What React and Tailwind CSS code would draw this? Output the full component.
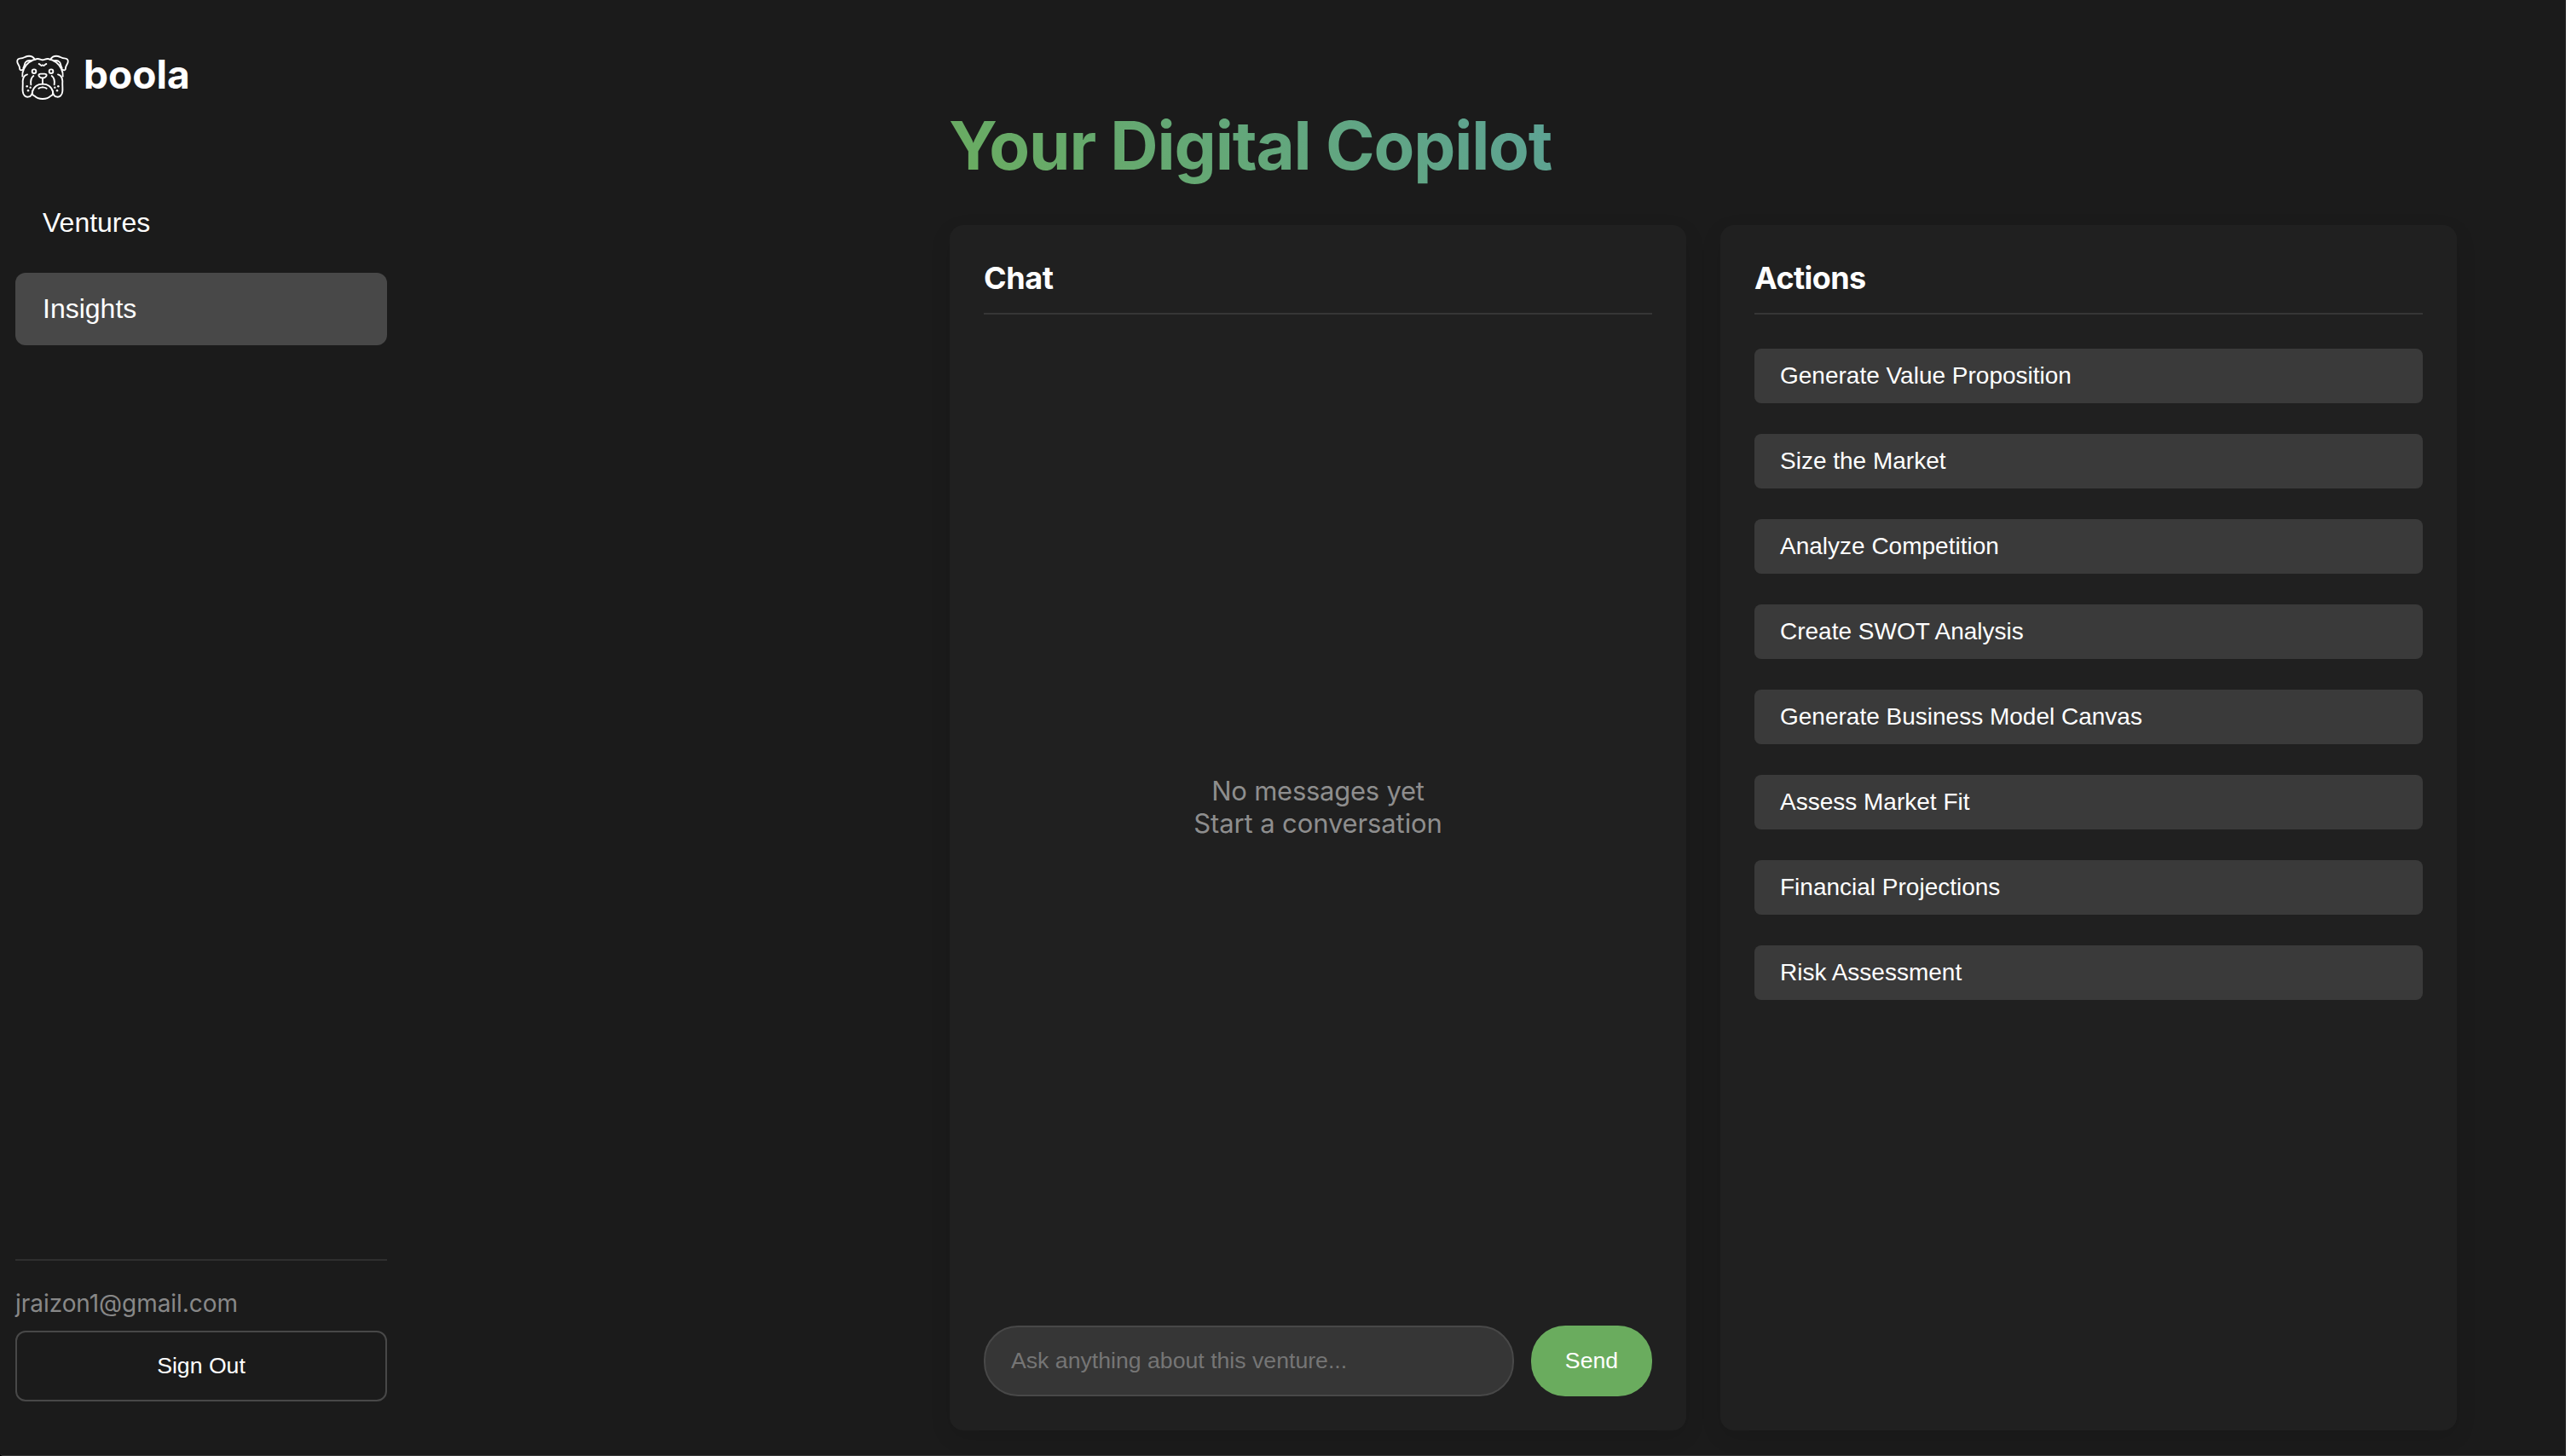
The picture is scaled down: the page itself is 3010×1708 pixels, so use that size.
import React from "react";

const ACTIONS = [
  "Generate Value Proposition",
  "Size the Market",
  "Analyze Competition",
  "Create SWOT Analysis",
  "Generate Business Model Canvas",
  "Assess Market Fit",
  "Financial Projections",
  "Risk Assessment",
];

function HalfDog() {
  return (
    <g>
      {/* ear */}
      <path d="M93 46C86 36 76 33 66 35C56 37 53 42 44 42C34 42 29 48 31 56C33 64 39 68 39 76C39 84 45 87 51 81" />
      <path d="M82 51C74 49 65 50 60 56C56 61 57 68 52 76" />
      {/* head side */}
      <path d="M120 48C112 48 110 43 101 44C82 48 62 60 54 80C49 90 48 96 49 106" />
      {/* cheek */}
      <path d="M66 99C58 101 51 108 50 122C51 136 49 146 50 158C51 172 60 179 69 178C80 177 84 168 84 158" />
      <path d="M88 104C80 110 77 122 79 135" />
      {/* muzzle and chin */}
      <path d="M120 133C104 132 88 142 84 160C83 168 84 173 92 175C100 184 110 185 120 185" />
      <path d="M106 148C110 145 115 144 120 144" />
      <circle cx="90" cy="88" r="7" />
      <g fill="white" stroke="none">
        <circle cx="65" cy="141" r="3.8" />
        <circle cx="77" cy="145" r="3.5" />
        <circle cx="69" cy="156" r="3.8" />
      </g>
    </g>
  );
}

function BulldogLogo() {
  return (
    <svg
      viewBox="24 26 192 168"
      className="h-14 w-16"
      fill="none"
      stroke="white"
      strokeWidth="5.6"
      strokeLinecap="round"
      strokeLinejoin="round"
    >
      <HalfDog />
      <g transform="translate(240 0) scale(-1 1)">
        <HalfDog />
      </g>
      <path d="M107 62C111 63 113 67 116 68L120 66L124 68C127 67 129 63 133 62" />
      <path d="M113 97H127C135 97 136 102 131 107C127 113 113 113 109 107C104 102 105 97 113 97Z" />
      <path d="M120 112V132" />
    </svg>
  );
}

function Sidebar() {
  return (
    <aside className="flex h-full w-[436px] flex-col pt-[63px] pb-[63px]">
      <div className="flex h-14 items-start gap-4">
        <BulldogLogo />
        <span className="-mt-[4px] font-['Inter',sans-serif] text-[46px] leading-[56px] font-bold">boola</span>
      </div>
      <nav className="mt-[99px] flex flex-col gap-4 text-[32px] leading-[37px]">
        <button className="h-[86px] rounded-xl px-8 text-left">Ventures</button>
        <button className="h-[85px] rounded-xl bg-[#484848] px-8 text-left">Insights</button>
      </nav>
      <div className="mt-auto border-t-2 border-[#2f2f2f] pt-8">
        <p className="mb-[16px] h-[34px] font-['Inter',sans-serif] text-[28px] leading-[37px] tracking-[-0.05px] text-[#888888]">
          jraizon1@gmail.com
        </p>
        <button className="h-[83px] w-full rounded-xl border-2 border-[#484848] pb-[2px] text-[26.67px]">
          Sign Out
        </button>
      </div>
    </aside>
  );
}

function Panel({ title, tracking, children }) {
  return (
    <section className="flex h-[1414px] w-[864px] flex-col rounded-2xl bg-[#202020] p-10 shadow-[0_8px_24px_rgba(0,0,0,0.1)]">
      <h2
        className={`h-[65px] shrink-0 border-b-2 border-[#363636] font-['Inter',sans-serif] text-[36px] leading-[45px] font-bold ${tracking}`}
      >
        {title}
      </h2>
      {children}
    </section>
  );
}

export default function App() {
  return (
    <div className="h-[1708px] w-[3010px] overflow-hidden bg-black">
      <div className="flex h-[1708px] w-[3010px] justify-between overflow-hidden rounded-bl-[4px] border-r border-b border-[#383838] bg-[#1b1b1b] pr-[127px] pl-[18px] font-['Liberation_Sans',Arial,sans-serif] text-white">
        <Sidebar />
        <main className="w-[1768px] pt-[122px]">
          <h1 className="-ml-px h-[142px] bg-[linear-gradient(45deg,#6aac5e,#4b95e0)] [background-size:100%_98px] bg-clip-text bg-no-repeat font-['Inter',sans-serif] text-[78px] leading-[98px] font-bold tracking-[-1.15px] text-transparent">
            Your Digital Copilot
          </h1>
          <div className="flex gap-10">
            <Panel title="Chat" tracking="tracking-[-0.4px]">
              <div className="flex flex-1 flex-col items-center justify-center pb-[30px] font-['Inter',sans-serif] text-[31px] leading-[38px] text-[#8e8e8e]">
                <p className="tracking-[-0.25px]">No messages yet</p>
                <p className="tracking-[-0.12px]">Start a conversation</p>
              </div>
              <form className="flex h-[83px] shrink-0 gap-5">
                <input
                  className="min-w-0 flex-1 rounded-[40px] border-2 border-[#484848] bg-[#363636] px-[30px] text-[26.67px] placeholder:text-[#757575] placeholder:opacity-100"
                  placeholder="Ask anything about this venture..."
                />
                <button type="button" className="w-[142px] rounded-[40px] bg-[#6aac5e] pb-[2px] text-[26.67px]">
                  Send
                </button>
              </form>
            </Panel>
            <Panel title="Actions" tracking="tracking-[-0.6px]">
              <div className="mt-10 flex flex-col gap-9">
                {ACTIONS.map((label) => (
                  <button
                    key={label}
                    className="h-16 rounded-lg bg-[#3a3a3a] px-[30px] text-left text-[28px] leading-8"
                  >
                    {label}
                  </button>
                ))}
              </div>
            </Panel>
          </div>
        </main>
      </div>
    </div>
  );
}
